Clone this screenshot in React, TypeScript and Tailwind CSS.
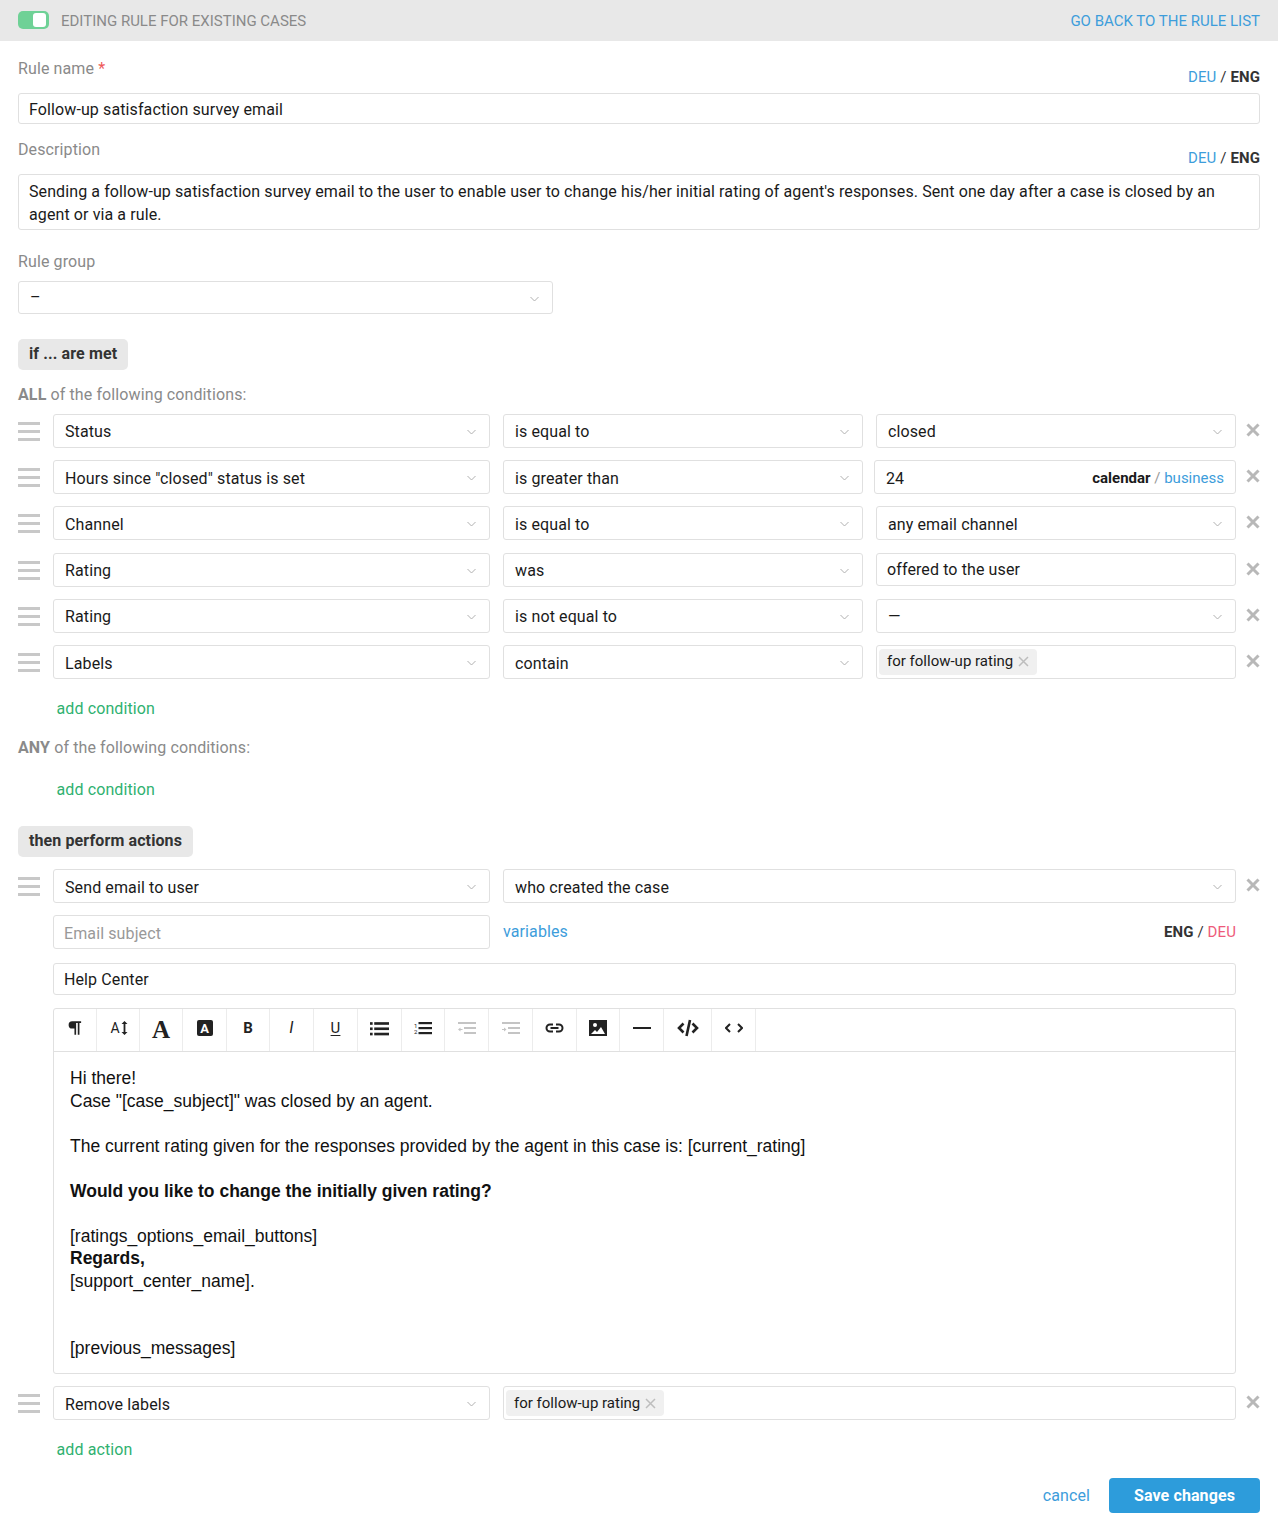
import { ReactNode } from 'react';

function Chevron() {
  return (
    <svg width="9" height="6" viewBox="0 0 9 6" className="shrink-0 mt-[2px]">
      <path d="M.5 1l4 4 4-4" fill="none" stroke="#b0b0b0" strokeWidth="1" />
    </svg>
  );
}

function Grip() {
  return (
    <div className="w-[35px] shrink-0 pt-[8px] pr-[13px]">
      <div className="h-[3px] bg-[#c8c8c8]" />
      <div className="h-[3px] bg-[#c8c8c8] mt-[5px]" />
      <div className="h-[3px] bg-[#c8c8c8] mt-[5px]" />
    </div>
  );
}

function Close() {
  return (
    <div className="w-[24px] ml-[5px] shrink-0 flex justify-center pt-[9px]">
      <svg width="14" height="14" viewBox="0 0 14 14">
        <path d="M1.500 1.500l11 11M12.500 1.500l-11 11" stroke="#b8b8b8" strokeWidth="3" />
      </svg>
    </div>
  );
}

function Select({ value, className = '', low = false, height = 'h-[34px]', flat = false }: { value: string; className?: string; low?: boolean; height?: string; flat?: boolean }) {
  const shift = flat ? '' : low ? 'mt-[4px]' : 'mt-[2px]';
  return (
    <div className={`${height} border border-[#e0e0e0] rounded-[3px] flex items-center justify-between pl-[11px] pr-[13px] text-[#1a1a1a] ${className}`}>
      <span className={shift}>{value}</span>
      <Chevron />
    </div>
  );
}

function Tag({ text, className = '' }: { text: string; className?: string }) {
  return (
    <span className={`h-[26px] bg-[#f0f0f0] rounded-[4px] inline-flex items-center pl-[8px] pr-[8px] gap-[5px] text-[#1a1a1a] text-[15px] tracking-normal ${className}`}>
      {text}
      <svg width="11" height="11" viewBox="0 0 11 11">
        <path d="M1 1l9 9M10 1l-9 9" stroke="#bdbdbd" strokeWidth="1.500" />
      </svg>
    </span>
  );
}

function Row({ first, second, third, low = false, className = '' }: { first: string; second: string; third: ReactNode; low?: boolean; className?: string }) {
  return (
    <div className={`flex pl-[18px] pr-[18px] ${className}`}>
      <Grip />
      <Select value={first} low={low} className="w-[437px] shrink-0" />
      <Select value={second} low={low} className="w-[360px] ml-[13px] shrink-0" />
      <div className="w-[360px] ml-[13px] shrink-0">{third}</div>
      <Close />
    </div>
  );
}

function LangSwitch() {
  return (
    <span className="text-[15px] text-[#333]">
      <span className="text-[#3d9ddb]">DEU</span> / <span className="font-bold">ENG</span>
    </span>
  );
}

const Ic = ({ children, w = 18 }: { children: ReactNode; w?: number }) => (
  <svg width={w} height={w} viewBox="0 0 18 18" fill="#222">
    {children}
  </svg>
);

const tools: { w: number; icon: ReactNode }[] = [
  { w: 43, icon: <Ic w={20}><path d="M6.500 3h8v1.500h-1.500V15h-1.500V4.500h-1.500V15H8.500V9.500h-2a3.250 3.250 0 0 1 0-6.500z" /></Ic> },
  { w: 43, icon: <span className="flex items-center gap-[1px] text-[14px] leading-none text-[#222] ml-[2px]">A<svg width="7" height="14" viewBox="0 0 7 14" fill="#222"><path d="M3.500 0l3 3H4.400v8h2.100l-3 3-3-3h2.100V3H.5z" /></svg></span> },
  { w: 43, icon: <span className="text-[25px] leading-none font-bold text-[#222] mt-[3px]" style={{ fontFamily: '"Liberation Serif", serif' }}>A</span> },
  { w: 44, icon: <span className="w-[16px] h-[16px] bg-[#222] rounded-[2px] flex items-center justify-center text-white font-bold text-[13px] leading-none tracking-normal">A</span> },
  { w: 43, icon: <span className="font-bold text-[15px] text-[#222]">B</span> },
  { w: 44, icon: <span className="italic text-[16px] text-[#222]">I</span> },
  { w: 44, icon: <span className="text-[15px] text-[#222] underline underline-offset-2">U</span> },
  { w: 44, icon: <Ic w={19}><rect x="0" y="3" width="2.500" height="2.500" /><rect x="0" y="8" width="2.500" height="2.500" /><rect x="0" y="13" width="2.500" height="2.500" /><rect x="4" y="3" width="14" height="2.500" /><rect x="4" y="8" width="14" height="2.500" /><rect x="4" y="13" width="14" height="2.500" /></Ic> },
  { w: 43, icon: <Ic><text x="0" y="9" fontSize="6" fontFamily="Roboto">1</text><text x="0" y="15" fontSize="6" fontFamily="Roboto">2</text><rect x="4.500" y="3" width="13.500" height="2.200" /><rect x="4.500" y="8" width="13.500" height="2.200" /><rect x="4.500" y="13" width="13.500" height="2.200" /></Ic> },
  { w: 44, icon: <Ic><g fill="#c4c4c4"><rect x="0" y="3" width="18" height="2" /><rect x="6" y="8" width="12" height="2" /><rect x="6" y="13" width="12" height="2" /><path d="M0 10.500l2.500-2v1.500h2v1h-2v1.500z" /></g></Ic> },
  { w: 44, icon: <Ic><g fill="#c4c4c4"><rect x="0" y="3" width="18" height="2" /><rect x="6" y="8" width="12" height="2" /><rect x="6" y="13" width="12" height="2" /><path d="M4.500 10.500l-2.500-2v1.500H0v1h2v1.500z" /></g></Ic> },
  { w: 44, icon: <svg width="19" height="10" viewBox="0 0 19 10" fill="none" stroke="#222" strokeWidth="2"><path d="M8 1.500H5a3.500 3.500 0 0 0 0 7h3M11 1.500h3a3.500 3.500 0 0 1 0 7h-3M5.500 5h8" /></svg> },
  { w: 43, icon: <svg width="18" height="16" viewBox="0 0 18 16"><rect width="18" height="16" fill="#222" /><circle cx="6" cy="5" r="2" fill="#fff" /><path d="M2 14l4-4 2 2 4-5 4 7z" fill="#fff" /></svg> },
  { w: 44, icon: <div className="w-[18px] h-[2px] bg-[#222]" /> },
  { w: 48, icon: <svg width="22" height="18" viewBox="0 0 22 18" fill="none" stroke="#222" strokeWidth="2.600"><path d="M6.500 4.500L2 9l4.500 4.500M15.500 4.500L20 9l-4.500 4.500M13 1L9.500 17" /></svg> },
  { w: 44, icon: <svg width="18" height="10" viewBox="0 0 18 10" fill="none" stroke="#222" strokeWidth="2"><path d="M5 1L1 5l4 4M13 1l4 4-4 4" /></svg> },
];

export default function App() {
  return (
    <div className="w-[1278px] h-[1535px] bg-white text-[16px] leading-[20px] tracking-[0.11px] text-[#1a1a1a] overflow-hidden" style={{ fontFamily: 'Roboto, sans-serif' }}>
      <div className="h-[41px] bg-[#e8e8e8] flex items-center justify-between pl-[18px] pr-[18px] tracking-normal">
        <div className="flex items-center gap-[12px]">
          <div className="w-[31px] h-[18px] bg-[#6fd196] rounded-[5px] flex items-center justify-end pr-[3px] -mt-[1px]">
            <div className="w-[13px] h-[14px] bg-white rounded-[3px]" />
          </div>
          <span className="text-[#8a8a8a] text-[15px]">EDITING RULE FOR EXISTING CASES</span>
        </div>
        <span className="text-[#3d9ddb] text-[15px]">GO BACK TO THE RULE LIST</span>
      </div>

      <div className="px-[18px]">
        <div className="flex justify-between pt-[18px] h-[52px]">
          <span className="text-[#8a8a8a]">Rule name <span className="text-[#ee5a5a]">*</span></span>
          <span className="pt-[8px]"><LangSwitch /></span>
        </div>
        <div className="h-[31px] border border-[#e0e0e0] rounded-[3px] flex items-center px-[10px]"><span className="mt-[2px]">Follow-up satisfaction survey email</span></div>
        <div className="flex justify-between pt-[16px] h-[50px]">
          <span className="text-[#8a8a8a]">Description</span>
          <span className="pt-[8px]"><LangSwitch /></span>
        </div>
        <div className="h-[56px] border border-[#e0e0e0] rounded-[3px] px-[10px] py-[6px] leading-[22.500px] tracking-[0.1px]">
          Sending a follow-up satisfaction survey email to the user to enable user to change his/her initial rating of agent's responses. Sent one day after a case is closed by an agent or via a rule.
        </div>
        <div className="text-[#8a8a8a] pt-[22px] h-[51px]">Rule group</div>
        <Select value="–" flat height="h-[33px]" className="w-[535px]" />
        <div className="mt-[25px] h-[31px] w-[110px] bg-[#e8e8e8] rounded-[5px] flex items-center pl-[11px] pb-[2px] font-bold text-[#333]">if ... are met</div>
        <div className="mt-[15px] text-[#8a8a8a]"><span className="font-bold">ALL</span> of the following conditions:</div>
      </div>

      <Row className="mt-[9px]" first="Status" second="is equal to" third={<Select value="closed" />} />
      <Row
        className="mt-[12px]"
        low
        first={'Hours since "closed" status is set'}
        second="is greater than"
        third={
          <div className="h-[34px] -ml-[2px] w-[362px] border border-[#e0e0e0] rounded-[3px] flex items-center justify-between pl-[11px] pr-[11px]">
            <span className="mt-[4px]">24</span>
            <span className="text-[15px] tracking-normal mt-[2px]"><span className="font-bold">calendar</span> <span className="text-[#999]">/</span> <span className="text-[#3d9ddb]">business</span></span>
          </div>
        }
      />
      <Row className="mt-[12px]" low first="Channel" second="is equal to" third={<Select value="any email channel" low />} />
      <Row
        className="mt-[13px]"
        first="Rating"
        second="was"
        third={<div className="h-[33px] border border-[#e0e0e0] rounded-[3px] flex items-center px-[10px]">offered to the user</div>}
      />
      <Row className="mt-[12px]" first="Rating" second="is not equal to" third={<Select value="—" />} />
      <Row
        className="mt-[12px]"
        low
        first="Labels"
        second="contain"
        third={<div className="h-[34px] border border-[#e0e0e0] rounded-[3px] flex items-center px-[2px]"><Tag text="for follow-up rating" className="pb-[2px]" /></div>}
      />

      <div className="ml-[56.500px] mt-[20px] text-[#2fb170]">add condition</div>
      <div className="ml-[18px] mt-[19px] text-[#8a8a8a]"><span className="font-bold">ANY</span> of the following conditions:</div>
      <div className="ml-[56.500px] mt-[22px] text-[#2fb170]">add condition</div>

      <div className="ml-[18px] mt-[26px] h-[31px] w-[175px] bg-[#e8e8e8] rounded-[5px] flex items-center pl-[11px] pb-[2px] font-bold text-[#333]">then perform actions</div>

      <div className="flex px-[18px] mt-[12px]">
        <Grip />
        <Select value="Send email to user" low className="w-[437px] shrink-0" />
        <Select value="who created the case" low className="w-[733px] ml-[13px] shrink-0" />
        <Close />
      </div>

      <div className="ml-[53px] w-[1183px]">
        <div className="mt-[12px] flex items-start">
          <div className="w-[437px] h-[34px] border border-[#e0e0e0] rounded-[3px] flex items-center px-[10px] text-[#999]"><span className="mt-[4px]">Email subject</span></div>
          <span className="ml-[13px] pt-[7px] text-[#3d9ddb]">variables</span>
          <span className="ml-auto pt-[7px] text-[15px] text-[#333]"><span className="font-bold">ENG</span> / <span className="text-[#ee5a7a]">DEU</span></span>
        </div>
        <div className="mt-[14px] h-[32px] border border-[#e0e0e0] rounded-[3px] flex items-center px-[10px]"><span className="mt-[2px]">Help Center</span></div>
        <div className="mt-[13px] h-[366px] border border-[#e0e0e0] rounded-[3px]">
          <div className="h-[43px] border-b border-[#e0e0e0] flex">
            {tools.map((t, i) => (
              <div key={i} style={{ width: t.w }} className="h-full border-r border-[#ececec] flex items-center justify-center shrink-0 pb-[4px]">
                {t.icon}
              </div>
            ))}
          </div>
          <div className="pl-[16px] pt-[15px] text-[17.500px] leading-[22.500px] text-[#111] tracking-normal" style={{ fontFamily: '"Liberation Sans", Arial, sans-serif' }}>
            <div>Hi there!</div>
            <div>Case "[case_subject]" was closed by an agent.</div>
            <div className="h-[22.500px]" />
            <div>The current rating given for the responses provided by the agent in this case is: [current_rating]</div>
            <div className="h-[22.500px]" />
            <div className="font-bold">Would you like to change the initially given rating?</div>
            <div className="h-[22.500px]" />
            <div>[ratings_options_email_buttons]</div>
            <div className="font-bold">Regards,</div>
            <div>[support_center_name].</div>
            <div className="h-[45px]" />
            <div>[previous_messages]</div>
          </div>
        </div>
      </div>

      <div className="flex px-[18px] mt-[12px]">
        <Grip />
        <Select value="Remove labels" low className="w-[437px] shrink-0" />
        <div className="w-[733px] ml-[13px] shrink-0 h-[34px] border border-[#e0e0e0] rounded-[3px] flex items-center px-[2px]"><Tag text="for follow-up rating" /></div>
        <Close />
      </div>

      <div className="ml-[56.500px] mt-[20px] text-[#2fb170]">add action</div>

      <div className="flex justify-end items-center pr-[18px] mt-[18px]">
        <span className="text-[#3d9ddb] mr-[19px]">cancel</span>
        <div className="w-[151px] h-[35px] bg-[#2d9cdb] rounded-[4px] flex items-center justify-center text-white font-bold">Save changes</div>
      </div>
    </div>
  );
}
